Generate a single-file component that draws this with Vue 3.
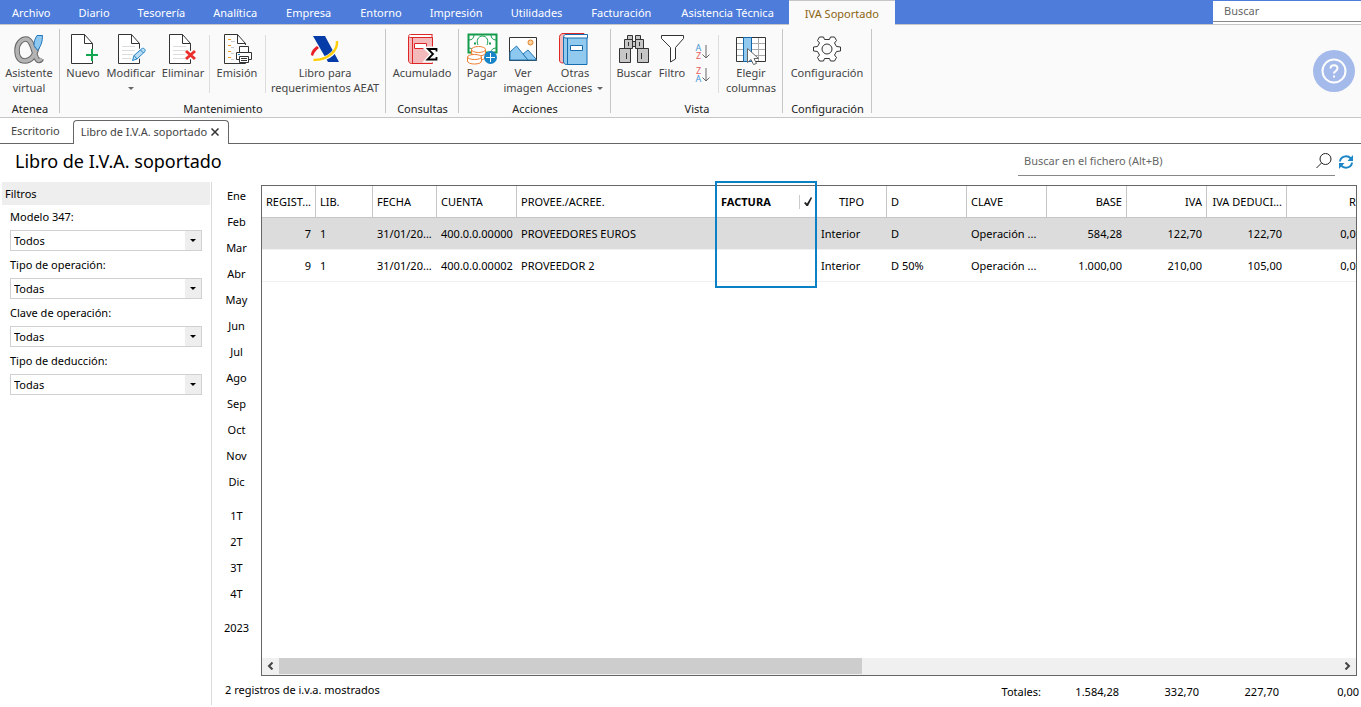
<script setup>
import { ref } from 'vue'

const menus = ['Archivo', 'Diario', 'Tesorería', 'Analítica', 'Empresa', 'Entorno', 'Impresión', 'Utilidades', 'Facturación', 'Asistencia Técnica', 'IVA Soportado']
const wideMenus = ['Empresa', 'Facturación', 'Asistencia Técnica']
const activeMenu = ref('IVA Soportado')

const page = (x) => `<path d="M${x + 21.5} 10.5V30.5H${x + 0.5}V1.5H${x + 13.5}L${x + 21.5} 10.5H${x + 13.5}V1.5" fill="#fff" stroke="#333"/>`
const lines = (x) => `<path d="M${x} 13.5h13M${x} 17.5h13M${x} 21.5h13M${x} 25.5h13" stroke="#ddd"/>`
const alpha = 'M24 14c-2 8-6 14-12 14-6 0-8-5-8-11s4-11 9-11c8 0 8 21.500 13 21.500 1.500 0 2-1 2.500-2'

const icons = {
  alpha: `<path d="${alpha}" stroke="#666" stroke-width="5.500"/><path d="${alpha}" stroke="#b4b4b4" stroke-width="3.500"/><path d="M24 2.500h5.500c0 5-1 10-5 15l-3.500-5c0-4 1-7 3-10z" fill="#8cc8f0" stroke="#2375b8"/>`,
  nuevo: page(4) + '<path d="M19 22h12M25 16v12" stroke="#fafafa" stroke-width="5"/><path d="M19 22h12M25 16v12" stroke="#12a650" stroke-width="2"/>',
  modificar: page(3) + lines(7) + '<path d="M17.500 27.500l1.500-5L27 15.500c1.500-1 4 1 3 3L22 26z" fill="#b9dcf3" stroke="#fff" stroke-width="3"/><path d="M17.500 27.500l1.500-5L27 15.500c1.500-1 4 1 3 3L22 26zM19 22.500l3 3.500M25.500 17l3 3" fill="#b9dcf3" stroke="#2584c6"/>',
  eliminar: page(2) + lines(6) + '<path d="M19 18l9 8M28 18l-9 8" stroke="#fff" stroke-width="6"/><path d="M19 18l9 8M28 18l-9 8" stroke="#ea302d" stroke-width="3"/>',
  emision: page(3) + '<path d="M7 6.500h3M7 12.500h3M7 18.500h3M7 24.500h3" stroke="#f0a020"/><path d="M10 8.500h4M10 14.500h5M10 20.500h4M10 26.500h4" stroke="#ccc"/><path d="M13 12h18v17H13z" fill="#fafafa"/><path d="M18.500 19.500v-6h9v6M18 26.500h-2.500v-7h15v7H28M18.500 23.500h9v6h-9zM20 25.500h6M20 27.500h6" fill="#fff" stroke="#333"/><path d="M17 21.500h2" stroke="#2584c6"/>',
  aeat: '<path d="M4 3h12l14 26H19z" fill="#053ca7"/><path d="M2 22c0-4 3-7 6-9l2 2c-3 2-5 5-6 8z" fill="#ea2027"/><path d="M28.500 8c1 9-8 19-24 19.500" stroke="#fff" stroke-width="4"/><path d="M28 8c1 9-8 19-23.500 19" stroke="#ffce09" stroke-width="2.500"/>',
  acumulado: '<path d="M2.500 4v23c0 2 1 3.500 3 3.500h21V4.500h-22" fill="#f4b9ba" stroke="#df2626"/><path d="M26.500 1.500h-22c-2.500 0-2.500 3 0 3h22M26 1.500v3M6.500 5v25" fill="#fff" stroke="#df2626"/><path d="M8.500 10.500h12v5h-12z" fill="#fff" stroke="#df2626"/><path d="M31 16h-9.500l5 5-5 6H31" stroke="#fafafa" stroke-width="5"/><path d="M30.500 18.500V16h-8.500l5 5-5.500 5.500h9V24" stroke="#000" stroke-width="1.800"/>',
  pagar: '<path d="M2.500 1.500h28v18h-28z" fill="#fff" stroke="#139b4b" stroke-width="2"/><path d="M3 7c3 0 5-2 5-5M30 7c-3 0-5-2-5-5M3 15c3 0 4 2 4 4M30 15c-3 0-5 2-5 4M12 12c-2-4 0-9 4.500-9s6.500 5 4.500 9" stroke="#139b4b"/><path d="M8 10.500h2M23 10.500h2" stroke="#139b4b" stroke-width="2"/><g fill="#fff" stroke="#ef7d31"><path d="M5.500 16v8c0 4 14 4 14 0v-8"/><ellipse cx="12.500" cy="16.500" rx="7" ry="3"/><path d="M5.500 20c1 4 13 4 14 0"/><path d="M1.500 24v4c0 4 14 4 14 0v-4"/><ellipse cx="8.500" cy="24" rx="7" ry="2.500"/></g><circle cx="24.500" cy="24.500" r="6.500" fill="#1784c7"/><path d="M20 24.500h9M24.500 20v9" stroke="#fff"/>',
  imagen: '<path d="M2.500 4.500h27v23h-27z" fill="#fff" stroke="#333"/><path d="M3 19L9.500 13 21 27H3z" fill="#8cc8f0" stroke="#2378b5"/><path d="M16 21l5-4 8 9v1H21z" fill="#8cc8f0" stroke="#2378b5"/><circle cx="23.500" cy="9.500" r="2.500" fill="#fbd6a1" stroke="#e77d23"/>',
  otras: '<path d="M25 .5H4c-2.500 0-3.500 2-3.500 4V27c0 2 1 3 4 3z" fill="#f4b9ba" stroke="#df2626"/><path d="M4.500 4v24c0 2 1 3.500 3 3.500h20.500V4.500H6" fill="#91c9ef" stroke="#176caf"/><path d="M28.500 1.500H7c-3 0-3 3.500 0 3.500h21.500zM8.500 5v26" fill="#fff" stroke="#176caf"/><path d="M11.500 12.500h12v5h-12z" fill="#fff" stroke="#176caf"/>',
  buscar: '<g fill="#c6c6c6" stroke="#333"><path d="M9.500 2.500h5v4h-5zM17.500 2.500h5v4h-5zM6.500 6.500h8v9h-8zM17.500 6.500h8v9h-8zM14.500 8.500h3v5h-3zM1.500 15.500h11v14h-11zM19.500 15.500h11v14h-11z"/></g><path d="M10.500 9v4M21.500 9v4M8.500 20v6M23.500 20v6" stroke="#333"/>',
  filtro: '<path d="M5.500 2.500h22v3l-8 9v11.500l-5 3V14.500l-9-9z" fill="#fff" stroke="#333"/>',
  columnas: '<path d="M1.500 4.500h29v24h-29z" fill="#fff"/><path d="M2 10.500h28M2 16.500h28M2 22.500h28M16.500 5v23M23.500 5v23" stroke="#aaa"/><path d="M1.500 4.500h29v24h-29z" stroke="#333"/><path d="M8.500 4.500h8v24h-8z" fill="#91c9ef" stroke="#1567ac"/><path d="M12.500 15.500v14l3.500-3 2.500 5 3-1-2.500-5h4.500z" fill="#fff" stroke="#666"/>',
  config: '<path d="M13.500 6.500l-1-2.500-4 0-2 3.500 2 2.500-2 3.500-4 .5v4l4 .5 2 3.500-2 2.500 2 3.500 4 0 1-2.500h5l1 2.500 4 0 2-3.500-2-2.500 2-3.500 4-.5v-4l-4-.5-2-3.500 2-2.500-2-3.500-4 0-1 2.500z" fill="#fff" stroke="#333" stroke-linejoin="round"/><circle cx="16" cy="16" r="5" fill="#fafafa" stroke="#333"/>'
}

const groups = [
  { title: 'Atenea', size: 'g60', items: [{ icon: 'alpha', text: ['Asistente', 'virtual'], size: 'w56' }] },
  {
    title: 'Mantenimiento', size: 'g326', items: [
      { icon: 'nuevo', text: ['Nuevo'], size: 'w44' },
      { icon: 'modificar', text: ['Modificar'], drop: 'below', size: 'w52' },
      { icon: 'eliminar', text: ['Eliminar'], size: 'w52' },
      { icon: 'emision', text: ['Emisión'], size: 'w56', sep: true },
      { icon: 'aeat', text: ['Libro para', 'requerimientos AEAT'], size: 'w120', sep: true }
    ]
  },
  { title: 'Consultas', size: 'g73', items: [{ icon: 'acumulado', text: ['Acumulado'], size: 'w70' }] },
  {
    title: 'Acciones', size: 'g152', items: [
      { icon: 'pagar', text: ['Pagar'], size: 'w44' },
      { icon: 'imagen', text: ['Ver', 'imagen'], size: 'w38' },
      { icon: 'otras', text: ['Otras', 'Acciones'], drop: 'inline', size: 'w66' }
    ]
  },
  {
    title: 'Vista', size: 'g172', items: [
      { icon: 'buscar', text: ['Buscar'], size: 'w44' },
      { icon: 'filtro', text: ['Filtro'], size: 'w32' },
      { sort: true },
      { icon: 'columnas', text: ['Elegir', 'columnas'], size: 'w66', sep: true }
    ]
  },
  { title: 'Configuración', size: 'g89', items: [{ icon: 'config', text: ['Configuración'], size: 'w86' }] }
]

const filters = ref([
  { id: 'modelo', label: 'Modelo 347:', value: 'Todos' },
  { id: 'tipo', label: 'Tipo de operación:', value: 'Todas' },
  { id: 'clave', label: 'Clave de operación:', value: 'Todas' },
  { id: 'deduccion', label: 'Tipo de deducción:', value: 'Todas' }
])

const months = ['Ene', 'Feb', 'Mar', 'Abr', 'May', 'Jun', 'Jul', 'Ago', 'Sep', 'Oct', 'Nov', 'Dic']
const quarters = ['1T', '2T', '3T', '4T']

const columns = [
  { key: 'reg', label: 'REGIST...', w: 54, right: true },
  { key: 'lib', label: 'LIB.', w: 57 },
  { key: 'fecha', label: 'FECHA', w: 64 },
  { key: 'cuenta', label: 'CUENTA', w: 80 },
  { key: 'prov', label: 'PROVEE./ACREE.', w: 200 },
  { key: 'fac', label: 'FACTURA', w: 100, sorted: true },
  { key: 'tipo', label: 'TIPO', w: 70, center: true },
  { key: 'd', label: 'D', w: 80 },
  { key: 'op', label: 'CLAVE', w: 80 },
  { key: 'base', label: 'BASE', w: 80, right: true },
  { key: 'iva', label: 'IVA', w: 80, right: true },
  { key: 'ded', label: 'IVA DEDUCI...', w: 80, right: true },
  { key: 're', label: 'RE', w: 80, right: true }
]
const rows = [
  { reg: '7', lib: '1', fecha: '31/01/20...', cuenta: '400.0.0.00000', prov: 'PROVEEDORES EUROS', fac: '', tipo: 'Interior', d: 'D', op: 'Operación ...', base: '584,28', iva: '122,70', ded: '122,70', re: '0,00' },
  { reg: '9', lib: '1', fecha: '31/01/20...', cuenta: '400.0.0.00002', prov: 'PROVEEDOR 2', fac: '', tipo: 'Interior', d: 'D 50%', op: 'Operación ...', base: '1.000,00', iva: '210,00', ded: '105,00', re: '0,00' }
]
const totals = ['1.584,28', '332,70', '227,70', '0,00']
const selected = ref('7')
</script>

<template>
  <div class="app">
    <header>
      <nav class="menubar">
        <button v-for="m in menus" :key="m" class="menu" :class="{ active: m === activeMenu, wide: wideMenus.includes(m) }" @click="activeMenu = m">{{ m }}</button>
        <input class="global-search" type="text" placeholder="Buscar" aria-label="Buscar">
      </nav>

      <div class="ribbon">
        <section v-for="g in groups" :key="g.title" class="group" :class="g.size">
          <div class="tools">
            <template v-for="(t, i) in g.items" :key="i">
              <div v-if="t.sort" class="sorts">
                <button aria-label="Orden ascendente">
                  <span class="letters"><b class="sort-a">A</b><b class="sort-z">Z</b></span>
                  <svg width="8" height="16" viewBox="0 0 8 16" fill="none"><path d="M4 1v13M.5 10.500L4 14l3.500-3.500" stroke="#666" /></svg>
                </button>
                <button aria-label="Orden descendente">
                  <span class="letters"><b class="sort-z">Z</b><b class="sort-a">A</b></span>
                  <svg width="8" height="16" viewBox="0 0 8 16" fill="none"><path d="M4 1v13M.5 10.500L4 14l3.500-3.500" stroke="#666" /></svg>
                </button>
              </div>
              <button v-else class="tool" :class="[t.size, { sep: t.sep }]">
                <svg width="32" height="32" viewBox="0 0 32 32" fill="none" v-html="icons[t.icon]"></svg>
                <span v-for="(line, n) in t.text" :key="line" class="line">{{ line }}<i v-if="t.drop === 'inline' && n === 1" class="caret side"></i></span>
                <i v-if="t.drop === 'below'" class="caret"></i>
              </button>
            </template>
          </div>
          <h2>{{ g.title }}</h2>
        </section>
        <button class="help" aria-label="Ayuda">
          <svg width="26" height="26" viewBox="0 0 26 26" fill="none" stroke="#fff" stroke-width="2">
            <circle cx="13" cy="13" r="11.500" />
            <path d="M9.500 10.500c0-4.500 7-4.500 7 0 0 2.500-3.500 2.500-3.500 5M13 17.500v2" />
          </svg>
        </button>
      </div>
    </header>

    <div class="tabs">
      <button class="tab">Escritorio</button>
      <div class="tab current">
        <button>Libro de I.V.A. soportado</button>
        <button class="close" aria-label="Cerrar pestaña">
          <svg width="8" height="8" viewBox="0 0 8 8"><path d="M.5 .5l7 7M7.500 .5l-7 7" stroke="#333" stroke-width="1.500" /></svg>
        </button>
      </div>
      <div class="rest"></div>
    </div>

    <div class="titlebar">
      <h1>Libro de I.V.A. soportado</h1>
      <div class="file-search">
        <input type="text" placeholder="Buscar en el fichero (Alt+B)" aria-label="Buscar en el fichero">
        <svg width="16" height="16" viewBox="0 0 16 16" fill="none" stroke="#222"><circle cx="9.500" cy="6" r="5.500" /><path d="M5.500 10L.5 15" /></svg>
      </div>
      <button class="refresh" aria-label="Actualizar">
        <svg width="14" height="14" viewBox="0 0 14 14" fill="none" stroke="#1c86c8" stroke-width="2">
          <path d="M1 6.500c.5-5 7-7 11-3M13 7.500c-.5 5-7 7-11 3" /><path d="M14 0v6H8.500zM0 14V8h5.500z" fill="#1c86c8" stroke="none" />
        </svg>
      </button>
    </div>

    <main>
      <aside class="filters">
        <h3>Filtros</h3>
        <div v-for="f in filters" :key="f.id" class="field">
          <label :for="f.id">{{ f.label }}</label>
          <div class="select">
            <select :id="f.id" v-model="f.value"><option>{{ f.value }}</option></select>
            <span class="arrow"><i class="caret dark"></i></span>
          </div>
        </div>
      </aside>

      <div class="content">
        <div class="upper">
          <nav class="periods">
            <button v-for="m in months" :key="m">{{ m }}</button>
            <button v-for="(q, i) in quarters" :key="q" :class="{ gap: i === 0 }">{{ q }}</button>
            <button class="gap">2023</button>
          </nav>
          <div class="grid">
            <div class="viewport">
              <table>
                <colgroup><col v-for="c in columns" :key="c.key" :style="{ width: c.w + 'px' }"></colgroup>
                <thead>
                  <tr>
                    <th v-for="c in columns" :key="c.key" :class="{ right: c.right, center: c.center, sorted: c.sorted }">
                      <div v-if="c.sorted" class="sorthead">{{ c.label }}
                        <span><svg width="8" height="10" viewBox="0 0 8 10"><path d="M0 6l1.500-1 1.500 1.500L7 0l1 1L4 9H2.500z" fill="#222" /></svg></span>
                      </div>
                      <template v-else>{{ c.label }}</template>
                    </th>
                  </tr>
                </thead>
                <tbody>
                  <tr v-for="r in rows" :key="r.reg" :class="{ selected: r.reg === selected }" @click="selected = r.reg">
                    <td v-for="c in columns" :key="c.key" :class="{ right: c.right }">{{ r[c.key] }}</td>
                  </tr>
                </tbody>
              </table>
            </div>
            <div class="scrollbar">
              <button aria-label="Desplazar a la izquierda"><svg width="7" height="8" viewBox="0 0 7 8" fill="none"><path d="M5.500 .5L2 4l3.500 3.500" stroke="#444" stroke-width="2" /></svg></button>
              <div class="track"><div class="thumb"></div></div>
              <button aria-label="Desplazar a la derecha"><svg width="7" height="8" viewBox="0 0 7 8" fill="none"><path d="M1.500 .5L5 4 1.500 7.500" stroke="#444" stroke-width="2" /></svg></button>
            </div>
            <div class="highlight"></div>
          </div>
        </div>
        <footer>
          <span class="count">2 registros de i.v.a. mostrados</span>
          <span class="total caption">Totales:</span>
          <span v-for="t in totals" :key="t" class="total">{{ t }}</span>
        </footer>
      </div>
    </main>
  </div>
</template>

<style>
body { background: #fff; }
</style>

<style scoped>
.app {
  box-sizing: border-box;
  min-height: 100vh;
  padding-bottom: 2px;
  display: flex;
  flex-direction: column;
  overflow: hidden;
  background: #fff;
  color: #000;
  font: 11px/15px "Noto Sans", "Open Sans", sans-serif;
}
.app *, .app *::before { box-sizing: border-box; }
button, input, select { font: inherit; color: inherit; border: 0; background: none; padding: 0; margin: 0; border-radius: 0; }
h1, h2, h3 { margin: 0; font-weight: 400; }
svg { display: block; flex: none; }

.menubar { display: flex; height: 24px; background: #4e7cdb; }
.menu { padding: 0 14px; color: #fff; white-space: nowrap; }
.menu:first-child { padding-left: 12px; }
.menu.wide { padding: 0 15px; }
.menu.active { background: #fafafa; color: #8a6410; border-top: 1px solid #c6c6c6; padding: 0 16px; height: 25px; position: relative; }
.global-search { margin: 1px 0 0 auto; width: 148px; height: 21px; padding: 0 11px 2px; background: #fff; border-bottom: 1px solid #888; box-shadow: 0 2px #fff; }
input { outline: none; }
input::placeholder { color: #666; opacity: 1; }

.ribbon { display: flex; height: 94px; background: #fafafa; border-top: 1px solid #c6c6c6; border-bottom: 1px solid #c6c6c6; }
.group { position: relative; display: flex; flex-direction: column; flex: none; padding-top: 8px; }
.group::before { content: ""; position: absolute; right: 0; top: 4px; bottom: 4px; border-right: 1px solid #c6c6c6; }
.group h2 { font-size: 11px; line-height: 15px; text-align: center; color: #222; }
.tools { display: flex; height: 68px; padding-left: 1px; }
.tool { position: relative; display: flex; flex-direction: column; align-items: center; color: #444; white-space: nowrap; flex: none; }
.tool.sep::before { content: ""; position: absolute; left: 0; top: 2px; bottom: 8px; border-left: 1px solid #ddd; }
.line { display: flex; align-items: center; height: 15px; }
.caret { border: 3px solid transparent; border-top-color: #666; border-bottom: 0; margin-top: 7px; }
.caret.side { margin: 1px 0 0 5px; }
.caret.dark { border-top-color: #000; margin: 0; }
.g60 { width: 60px; }
.g73 { width: 73px; }
.g89 { width: 89px; }
.g152 { width: 152px; }
.g172 { width: 172px; }
.g326 { width: 326px; }
.w32 { width: 32px; }
.w38 { width: 38px; }
.w44 { width: 44px; }
.w52 { width: 52px; }
.w56 { width: 56px; }
.w66 { width: 66px; }
.w70 { width: 70px; }
.w86 { width: 86px; }
.w120 { width: 120px; }
.sorts { display: flex; flex-direction: column; gap: 7px; padding: 11px 8px 0 7px; }
.sorts button { display: flex; height: 16px; }
.letters { display: flex; flex-direction: column; width: 7px; }
.letters b { height: 8px; font-size: 9px; line-height: 8px; font-weight: 400; }
.sort-a { color: #3f97d3; }
.sort-z { color: #ea5a5a; }
.help { margin: auto 6px auto auto; width: 42px; height: 42px; border-radius: 50%; background: #a4baeb; display: flex; align-items: center; justify-content: center; }

.tabs { display: flex; height: 26px; padding-top: 2px; color: #444; }
.tab { padding: 0 13px 2px 11px; border-bottom: 1px solid #666; white-space: nowrap; }
.tab.current { display: flex; align-items: center; gap: 2px; padding: 0 7px 2px; border: 1px solid #666; border-bottom: 0; border-radius: 4px 4px 0 0; }
.close { padding: 2px; }
.rest { flex: 1; border-bottom: 1px solid #666; }

.titlebar { display: flex; height: 38px; padding: 0 8px 0 15px; align-items: flex-start; }
h1 { font-size: 18px; line-height: 34px; flex: 1; }
.file-search { display: flex; align-items: center; width: 317px; height: 32px; padding: 3px 3px 0 6px; border-bottom: 1px solid #888; }
.file-search input { flex: 1; min-width: 0; padding-bottom: 2px; }
.refresh { margin: 11px 0 0 4px; }

main { display: flex; flex: 1; }
.filters { flex: none; width: 212px; border-right: 1px solid #dadada; }
h3 { margin: 0 1px 0 2px; padding: 0 3px; font-size: 11px; line-height: 23px; background: #eee; }
.field { padding: 4px 9px 0 10px; margin-bottom: 2px; }
.field label { display: block; line-height: 16px; margin-bottom: 5px; }
.select { position: relative; height: 21px; }
select { appearance: none; width: 100%; height: 21px; padding: 0 3px; background: #fff; border: 1px solid #d0d0d0; }
.arrow { position: absolute; right: 1px; top: 1px; bottom: 1px; width: 16px; display: flex; align-items: center; justify-content: center; background: #eee; pointer-events: none; }

.content { flex: 1; min-width: 0; display: flex; flex-direction: column; }
.upper { flex: 1; display: flex; padding-right: 4px; }
.periods { width: 49px; display: flex; flex-direction: column; }
.periods button { height: 26px; text-align: center; flex: none; }
.periods .gap { margin-top: 8px; }
.grid { position: relative; flex: 1; min-width: 0; margin-top: 3px; display: flex; flex-direction: column; border: 1px solid #666; }
.viewport { flex: 1; overflow: hidden; }
table { table-layout: fixed; width: 1105px; border-collapse: separate; border-spacing: 0; }
th, td { height: 32px; padding: 0 4px; text-align: left; font-weight: 400; white-space: nowrap; overflow: hidden; border-bottom: 1px solid #f0f0f0; }
th { border-right: 1px solid #c6c6c6; border-bottom-color: #c6c6c6; }
.right { text-align: right; }
td.right { padding-right: 5px; }
th.center { text-align: center; }
th.sorted { font-weight: 700; padding-right: 0; }
.sorthead { display: flex; justify-content: space-between; align-items: center; }
.sorthead span { border-left: 1px solid #ccc; padding: 2px 4px; }
.selected td { background: #dcdcdc; }
.scrollbar { display: flex; height: 17px; background: #f0f0f0; padding-bottom: 1px; }
.scrollbar button { width: 17px; display: flex; align-items: center; justify-content: center; }
.track { flex: 1; }
.thumb { width: 55%; height: 100%; background: #cdcdcd; }
.highlight { position: absolute; left: 453px; top: -5px; width: 102px; height: 107px; border: 2px solid #0a81c4; pointer-events: none; }

footer { display: flex; align-items: center; height: 29px; padding: 0 2px 2px 13px; }
.count { flex: 1; }
.total { width: 80px; text-align: right; padding-top: 3px; }
.total.caption { width: auto; }
.total.caption + .total { width: 78px; }
</style>
